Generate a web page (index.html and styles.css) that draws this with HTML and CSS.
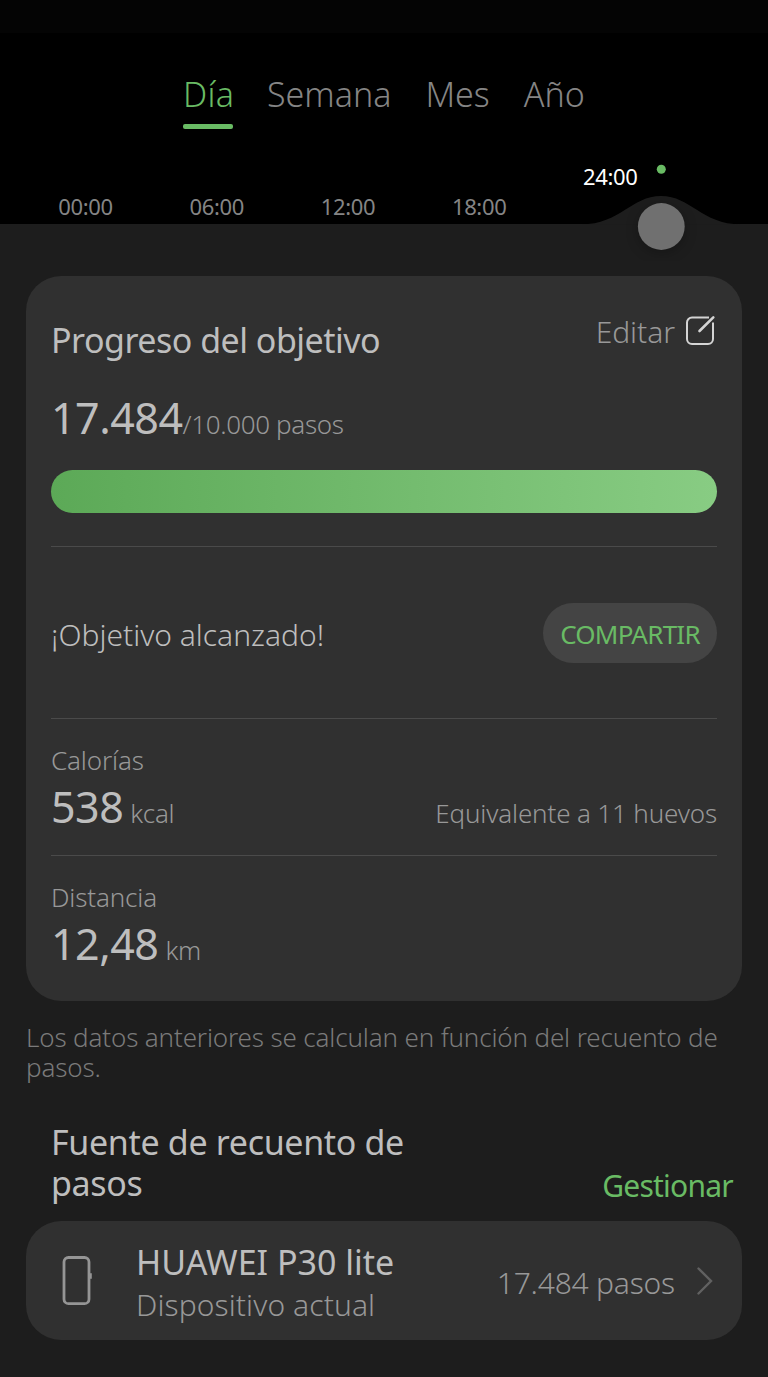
FILE: index.html
```html
<!DOCTYPE html>
<html lang="es">
<head>
    <meta charset="UTF-8">
    <meta name="viewport" content="width=device-width, initial-scale=1.0">
    <title>Pasos</title>
    <link rel="stylesheet" href="styles.css">
</head>
<body>
    <header class="top">
        <div class="status-strip"></div>
        <nav class="tabs">
            <a class="tab active">Día</a>
            <a class="tab">Semana</a>
            <a class="tab">Mes</a>
            <a class="tab">Año</a>
        </nav>
        <div class="timeline">
            <span>00:00</span>
            <span>06:00</span>
            <span>12:00</span>
            <span>18:00</span>
            <span class="current">24:00</span>
        </div>
        <!-- Tirador de la hora seleccionada -->
        <svg class="slider" width="168" height="104" viewBox="0 0 168 104">
            <circle cx="84.3" cy="12.3" r="4.5" fill="#69bb64"/>
            <path d="M4 67.500 C44 67 54 39 84 39 S124 67 164 67.500 Z" fill="#1d1d1d"/>
            <circle class="thumb" cx="84.3" cy="69.5" r="23.4" fill="#707070"/>
        </svg>
    </header>

    <main>
        <section class="card goal-card">
            <div class="card-head">
                <h2>Progreso del objetivo</h2>
                <a class="edit">
                    <span>Editar</span>
                    <svg width="32" height="32" viewBox="0 0 32 32" fill="none" stroke="#d4d4d4" stroke-width="2">
                        <path d="M24 2.500H7a5 5 0 0 0-5 5V24a5 5 0 0 0 5 5H23a5 5 0 0 0 5-5V7.500"/>
                        <path d="M14.500 16L28.300 2.300" stroke-width="2.6" stroke-linecap="round"/>
                    </svg>
                </a>
            </div>
            <p class="steps"><span class="value">17.484</span><span class="unit">/10.000 pasos</span></p>
            <div class="bar"></div>

            <div class="goal">
                <span class="goal-text">¡Objetivo alcanzado!</span>
                <button class="btn-share">COMPARTIR</button>
            </div>

            <div class="stat">
                <div class="label">Calorías</div>
                <div class="stat-row">
                    <span class="value">538</span>
                    <span class="unit">kcal</span>
                    <span class="extra">Equivalente a 11 huevos</span>
                </div>
            </div>

            <div class="stat">
                <div class="label">Distancia</div>
                <div class="stat-row">
                    <span class="value">12,48</span>
                    <span class="unit">km</span>
                </div>
            </div>
        </section>

        <p class="note">Los datos anteriores se calculan en función del recuento de pasos.</p>

        <div class="source-head">
            <h2>Fuente de recuento de pasos</h2>
            <a class="manage">Gestionar</a>
        </div>

        <section class="card device">
            <svg class="phone" width="32" height="52" viewBox="0 0 32 52" fill="none" stroke="#959595">
                <rect x="3" y="2.5" width="25" height="46.2" rx="4.5" stroke-width="2.8"/>
                <path d="M29.900 18.200v5.600" stroke-width="1.8"/>
            </svg>
            <div class="device-info">
                <div class="device-name">HUAWEI P30 lite</div>
                <div class="device-sub">Dispositivo actual</div>
            </div>
            <span class="device-steps">17.484 pasos</span>
            <svg class="chevron" width="18" height="30" viewBox="0 0 18 30" fill="none" stroke="#616161" stroke-width="2.4" stroke-linecap="round">
                <path d="M2.5 2.5L15 15L2.5 27.5"/>
            </svg>
        </section>
    </main>
</body>
</html>
```
FILE: styles.css
```css
:root {
    --page: #1d1d1d;
    --card: #303030;
    --line: #4a4a4a;
    --green: #69bb64;
    --text: #bebebe;
    --text-dim: #989898;
    --text-faint: #7a7a7a;
}

* {
    box-sizing: border-box;
}

body {
    margin: 0;
    height: 1377px;
    background: var(--page);
    color: var(--text);
    font-family: "Noto Sans", "Open Sans", sans-serif;
    overflow: hidden;
}

h2, p {
    margin: 0;
}

svg {
    display: block;
    flex: none;
}

/* Cabecera */
.top {
    position: relative;
    height: 224px;
    background: #000;
}

.status-strip {
    height: 33px;
    background: #040404;
}

.tabs {
    display: flex;
    gap: 34px;
    padding: 41px 0 0 183px;
}

.tab {
    color: #858585;
    font-size: 34px;
    font-weight: 300;
    line-height: 40px;
}

.tab.active {
    width: 50px;
    height: 55px;
    color: var(--green);
    letter-spacing: 0.3px;
}

.tab.active::after {
    content: "";
    display: block;
    height: 5px;
    margin-top: 10px;
    border-radius: 2px;
    background: var(--green);
}

.timeline {
    display: flex;
    align-items: flex-end;
    height: 95px;
    padding: 0 0 3px 20px;
    color: #858585;
    font-size: 22px;
    line-height: 30px;
    letter-spacing: -0.35px;
}

.timeline span {
    width: 131.2px;
    text-align: center;
}

.timeline .current {
    padding-bottom: 30px;
    color: #fff;
}

.slider {
    position: absolute;
    left: 577px;
    top: 157px;
}

.thumb {
    filter: drop-shadow(0 3px 6px rgba(0, 0, 0, 0.25));
}

/* Tarjetas */
main {
    padding: 52px 26px 0;
}

.card {
    border-radius: 35px;
    background: var(--card);
}

.goal-card {
    height: 725px;
    padding: 41px 25px 0;
}

h2 {
    font-size: 34px;
    font-weight: 400;
    line-height: 46px;
    letter-spacing: -0.5px;
}

.card-head {
    display: flex;
    justify-content: space-between;
    align-items: flex-start;
    height: 46px;
}

.edit {
    display: flex;
    gap: 10px;
    margin-top: -5px;
    color: var(--text-dim);
    font-size: 30px;
    font-weight: 300;
    line-height: 40px;
    letter-spacing: -0.05px;
}

.edit svg {
    margin-top: 3px;
}

.value {
    font-size: 43px;
    font-weight: 400;
    letter-spacing: -0.5px;
}

.unit,
.label,
.extra {
    color: var(--text-dim);
    font-size: 26px;
    font-weight: 300;
}

.steps {
    height: 56px;
    margin-top: 27px;
    line-height: 56px;
}

.steps .unit {
    letter-spacing: -0.35px;
}

.bar {
    height: 43px;
    margin-top: 24px;
    border-radius: 22px;
    background: linear-gradient(90deg, #5ca957, #88cc83);
}

.goal {
    display: flex;
    justify-content: space-between;
    align-items: center;
    height: 172px;
    margin-top: 33px;
    border-top: 1px solid var(--line);
}

.goal-text {
    padding-top: 3px;
    font-size: 30px;
    font-weight: 300;
}

.btn-share {
    width: 174px;
    height: 60px;
    padding: 2px 0 0;
    border: none;
    border-radius: 30px;
    background: #444;
    color: var(--green);
    font-family: inherit;
    font-size: 26px;
    letter-spacing: -0.75px;
}

.stat {
    height: 137px;
    padding-top: 24px;
    border-top: 1px solid var(--line);
}

.label {
    line-height: 34px;
    letter-spacing: -0.15px;
}

.stat-row {
    display: flex;
    align-items: baseline;
    margin-top: 4px;
    line-height: 52px;
}

.stat-row .unit {
    margin-left: 7px;
    letter-spacing: -0.3px;
}

.extra {
    margin-left: auto;
    letter-spacing: -0.15px;
}

.note {
    margin-top: 21px;
    color: var(--text-faint);
    font-size: 26px;
    font-weight: 300;
    line-height: 30px;
    letter-spacing: -0.15px;
}

/* Fuente de datos */
.source-head {
    display: flex;
    justify-content: space-between;
    align-items: flex-end;
    margin-top: 40px;
    padding: 0 9px 0 25px;
}

.source-head h2 {
    width: 400px;
    line-height: 41px;
    letter-spacing: -0.33px;
}

.manage {
    margin-bottom: -2px;
    color: var(--green);
    font-size: 30px;
    line-height: 40px;
    letter-spacing: -0.75px;
}

.device {
    display: flex;
    align-items: center;
    height: 119px;
    margin-top: 17px;
    padding: 0 28px 0 35px;
}

.device-info {
    flex: 1;
    margin: 3px 0 0 43px;
}

.device-name {
    font-size: 34px;
    line-height: 44px;
}

.device-sub {
    color: var(--text-dim);
    font-size: 30px;
    font-weight: 300;
    line-height: 41px;
    letter-spacing: 0.1px;
}

.device-steps {
    padding-top: 3px;
    color: var(--text-dim);
    font-size: 30px;
    font-weight: 300;
    letter-spacing: -0.2px;
}

.chevron {
    margin-left: 21px;
}
```
